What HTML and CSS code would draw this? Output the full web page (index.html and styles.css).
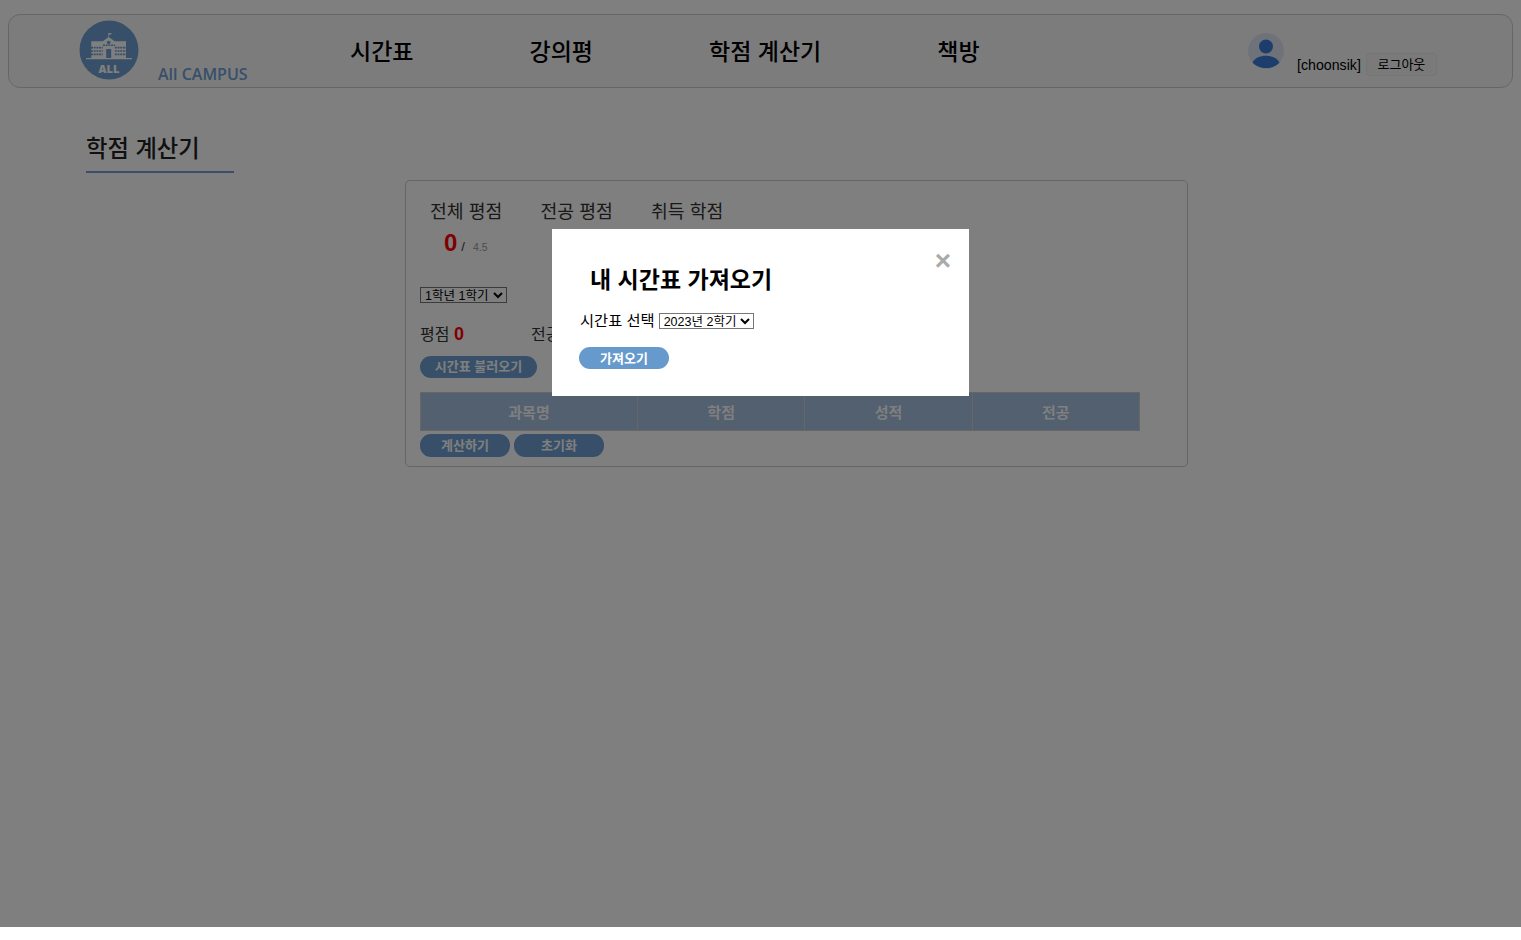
FILE: index.html
```html
<!DOCTYPE html>
<html lang="ko">
<head>
  <meta charset="UTF-8" />
  <meta name="viewport" content="width=device-width, initial-scale=1.0"/>
  <title>학점 계산기</title>
  <link rel="stylesheet" href="styles.css">
</head>
<body>
  <header class="topbar">
    <a class="brand">
      <svg class="logo" viewBox="0 0 60 60" width="60" height="60">
        <circle cx="30" cy="30" r="29.5" fill="#6f9fd2"/>
        <path d="M29.6 13v4" stroke="#fff" stroke-width=".7"/>
        <path d="M29.8 13h2.6v1.6h-2.6z" fill="#fff"/>
        <path fill="#fff" d="M29.7 17l6 4.2h11.3v17H12.300v-17h11.400z"/>
        <path fill="#fff" d="M7 38h46v1.300H7z"/>
        <circle cx="29.700" cy="22.500" r="1.800" fill="#6f9fd2"/>
        <path fill="#6f9fd2" d="M27.200 29h5v9h-5z"/>
        <path fill="none" stroke="#6f9fd2" stroke-width="1.600" stroke-dasharray="2 .7" d="M12 27.600h11.800M35.800 27.600h11.800M12 31h11.800M35.800 31h11.800M12 34.400h11.800M35.800 34.400h11.800M24 25.300h12"/>
        <text x="30" y="53" class="logo-text">ALL</text>
      </svg>
      <span class="brand-name">All CAMPUS</span>
    </a>
    <nav class="menu">
      <a>시간표</a>
      <a>강의평</a>
      <a>학점 계산기</a>
      <a>책방</a>
    </nav>
    <div class="user">
      <svg class="avatar" viewBox="0 0 36 36" width="36" height="36">
        <circle cx="18" cy="18" r="18" fill="#dfe5f2"/>
        <circle cx="18" cy="13.500" r="7" fill="#3b7ddb"/>
        <path d="M4.500 29.500C7 24.800 12 22.800 18 22.800s11 2 13.500 6.700C28.500 33 23.500 35 18 35S7.500 33 4.500 29.500z" fill="#3b7ddb"/>
      </svg>
      <span class="user-name">[choonsik]</span>
      <button class="logout">로그아웃</button>
    </div>
  </header>

  <main class="content">
    <h2 class="page-title">학점 계산기</h2>
    <section class="panel">
      <div class="stats">
        <div class="stat">
          <div class="stat-label">전체 평점</div>
          <div class="stat-value"><b>0</b><span class="slash">/</span><small>4.5</small></div>
        </div>
        <div class="stat">
          <div class="stat-label">전공 평점</div>
        </div>
        <div class="stat">
          <div class="stat-label">취득 학점</div>
        </div>
      </div>
      <select class="select term">
        <option>1학년 1학기</option>
      </select>
      <div class="term-score">
        <span class="score">평점 <b>0</b></span>
        <span class="score">전공 <b>0</b></span>
      </div>
      <button class="pill load">시간표 불러오기</button>
      <table class="grades">
        <thead>
          <tr>
            <th class="col-name">과목명</th>
            <th>학점</th>
            <th>성적</th>
            <th>전공</th>
          </tr>
        </thead>
      </table>
      <div class="actions">
        <button class="pill">계산하기</button>
        <button class="pill">초기화</button>
      </div>
    </section>
  </main>

  <div class="overlay">
    <div class="modal">
      <span class="close">×</span>
      <h2 class="modal-title">내 시간표 가져오기</h2>
      <div class="modal-row">
        <label>시간표 선택</label>
        <select class="select year">
          <option>2023년 2학기</option>
        </select>
      </div>
      <button class="pill fetch">가져오기</button>
    </div>
  </div>
</body>
</html>
```

FILE: styles.css
```css
* {
  box-sizing: border-box;
}

html, body {
  height: 100%;
}

body {
  margin: 0;
  padding: 14px 8px 0;
  background-color: #fff;
  font-family: "Noto Sans CJK KR", "Liberation Sans", sans-serif;
  color: #000;
}

/* 상단 메뉴 */
.topbar {
  display: flex;
  height: 74px;
  padding-left: 70px;
  border: 1px solid #ccc;
  border-radius: 12px;
  background-color: #f8f9fa;
}

.brand {
  display: flex;
  width: 271px;
  padding-top: 5px;
}

.logo {
  flex-shrink: 0;
}

.logo-text {
  font-family: "Open Sans", sans-serif;
  font-size: 11px;
  font-weight: 800;
  fill: #fff;
  text-anchor: middle;
}

.brand-name {
  margin: 43px 0 0 19px;
  font-family: "Open Sans", sans-serif;
  font-size: 16px;
  line-height: 22px;
  font-weight: 600;
  color: #6f9fd2;
  white-space: nowrap;
}

.menu {
  display: flex;
  gap: 116px;
  width: 898px;
  padding-top: 19px;
  font-size: 23px;
  line-height: 32px;
  font-weight: 500;
}

.user {
  display: flex;
  align-items: flex-start;
  padding-top: 18px;
}

.user-name {
  margin: 23px 0 0 13px;
  font-family: "Liberation Sans", sans-serif;
  font-size: 14.200px;
  line-height: 18px;
}

.logout {
  width: 71px;
  height: 23px;
  margin: 20px 0 0 5px;
  padding: 0 0 3px;
  border: 1px solid #eaeaea;
  border-radius: 4px;
  background-color: #f4f4f4;
  font-family: inherit;
  font-size: 13px;
  line-height: 19px;
  color: #000;
}

/* 본문 */
.content {
  padding-left: 78px;
}

.page-title {
  width: 148px;
  height: 48px;
  margin: 37px 0 0;
  border-bottom: 2px solid #6f9fd2;
  font-size: 23.300px;
  line-height: 44px;
  font-weight: 500;
  color: #222;
}

.panel {
  width: 783px;
  height: 287px;
  margin: 7px 0 0 319px;
  padding: 16px 14px 0;
  border: 1px solid #ccc;
  border-radius: 5px;
}

.stats {
  display: flex;
  gap: 37.500px;
  height: 90px;
  padding-left: 10px;
}

.stat-label {
  width: 73px;
  font-size: 18.300px;
  line-height: 26px;
  white-space: nowrap;
  color: #333;
}

.stat-value {
  display: flex;
  align-items: baseline;
  padding: 3px 0 0 14px;
  white-space: nowrap;
  line-height: 34px;
}

.stat-value b {
  font-family: "Liberation Sans", sans-serif;
  font-size: 24px;
  color: #f00;
}

.slash {
  margin-left: 4px;
  font-family: "Liberation Sans", sans-serif;
  font-size: 13px;
  color: #333;
}

.stat-value small {
  margin-left: 8px;
  font-family: "Liberation Sans", sans-serif;
  font-size: 10.500px;
  color: #999;
}

.select {
  display: block;
  height: 16px;
  padding: 0;
  border: 1px solid #767676;
  background-color: #fff;
  font-family: "Liberation Sans", "Noto Sans CJK KR", sans-serif;
  font-size: 12.500px;
  line-height: 14px;
  color: #000;
}

.term {
  width: 87px;
}

.year {
  width: 95px;
  margin-top: 4px;
}

.term-score {
  display: flex;
  height: 52px;
  padding-top: 19px;
  font-size: 16px;
  line-height: 23px;
  color: #333;
}

.score {
  width: 111px;
}

.score b {
  font-family: "Liberation Sans", sans-serif;
  font-size: 18px;
  color: #f00;
}

.pill {
  width: 90px;
  height: 23px;
  padding: 0 0 2px;
  border: 0;
  border-radius: 11px;
  background-color: #6f9fd2;
  font-family: inherit;
  font-size: 13px;
  line-height: 18px;
  font-weight: 700;
  color: #fff;
}

.load {
  display: block;
  width: 117px;
  height: 22px;
  margin-top: 1px;
}

.grades {
  width: 720px;
  margin-top: 14px;
  border-collapse: collapse;
  table-layout: fixed;
}

.grades th {
  height: 38px;
  border: 1px solid #ccc;
  background-color: #a4c0e0;
  font-size: 15px;
  font-weight: 700;
  color: #fff;
}

.col-name {
  width: 217px;
}

.actions {
  display: flex;
  gap: 4px;
  margin-top: 3px;
}

/* 모달 */
.overlay {
  position: fixed;
  top: 0;
  left: 0;
  width: 100%;
  height: 927px;
  background-color: rgba(0, 0, 0, 0.5);
}

.modal {
  position: absolute;
  top: 229px;
  left: 552px;
  width: 417px;
  height: 167px;
  padding: 0 27px;
  background-color: #fff;
}

.close {
  position: absolute;
  top: 14px;
  right: 18px;
  font-family: "Liberation Sans", sans-serif;
  font-size: 28px;
  line-height: 36px;
  font-weight: 700;
  color: #aaa;
}

.modal-title {
  margin: 0;
  padding: 31px 0 0 11px;
  font-size: 23px;
  line-height: 36px;
  font-weight: 700;
}

.modal-row {
  display: flex;
  align-items: flex-start;
  gap: 4px;
  margin: 13px 0 0 1px;
  font-size: 15.300px;
  line-height: 20px;
}

.fetch {
  display: block;
  height: 22px;
  margin-top: 18px;
  padding: 0;
  background-color: #6699cc;
}
```
